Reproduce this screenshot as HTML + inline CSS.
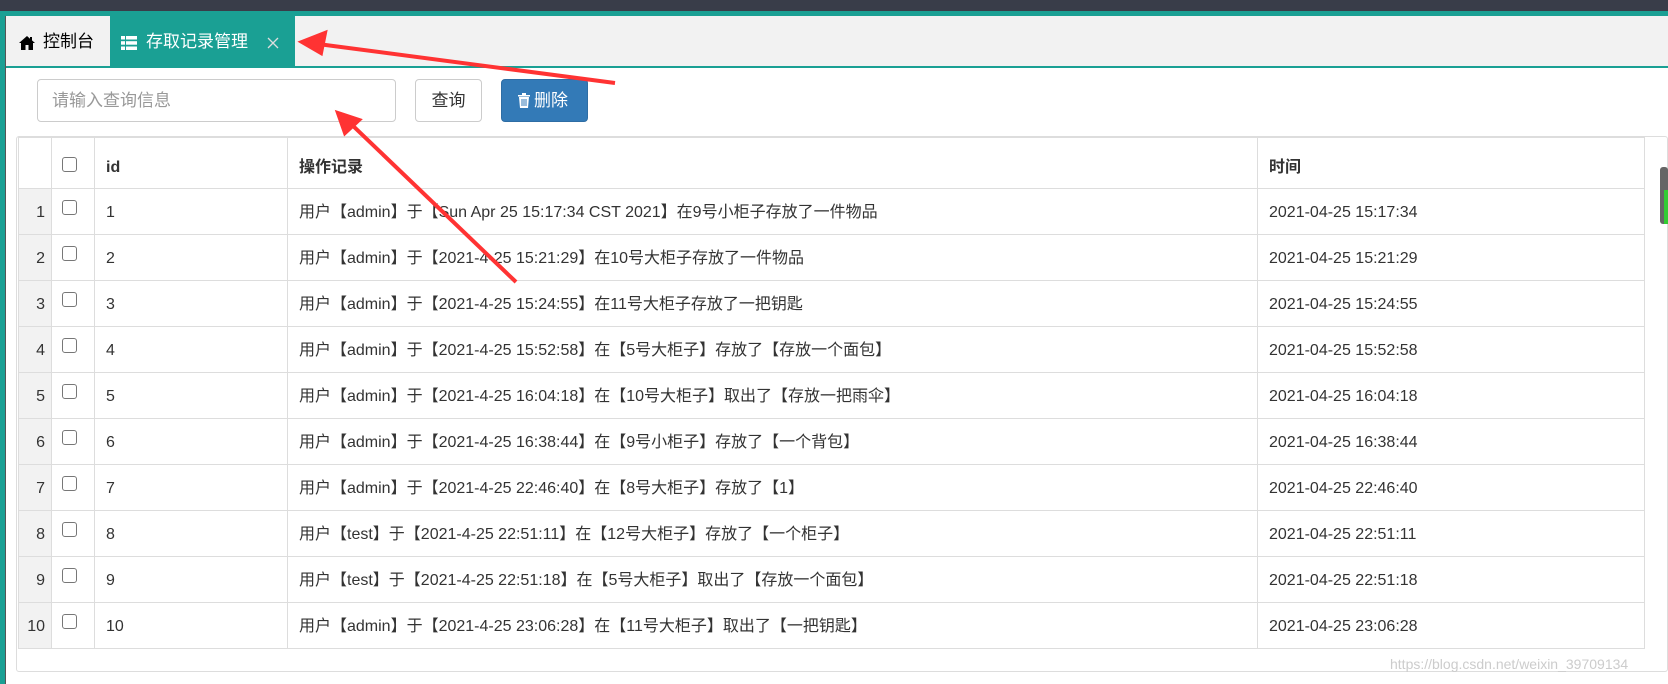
<!DOCTYPE html>
<html><head><meta charset="utf-8"><style>
*{box-sizing:border-box;margin:0;padding:0}
body{width:1668px;height:684px;overflow:hidden;background:#fff;font-family:"Liberation Sans","Noto Sans CJK SC",sans-serif;color:#333;position:relative}
.a{position:absolute;white-space:nowrap}
table{border-collapse:collapse;position:absolute;left:18px;top:137px;width:1627px;font-size:16px}
td,th{border:1px solid #ddd;height:46px;padding:2px 11px 0;text-align:left;white-space:nowrap;line-height:18px}
th{height:51px;vertical-align:bottom;padding-bottom:11px;font-weight:bold}
td.n{background:#f2f2f2;text-align:right;padding:2px 6px 0 0;width:33px}
.cb{display:inline-block;width:15px;height:15px;border:1px solid #777;border-radius:3px;background:#fff}
td.c{width:43px;padding:0 0 0 10px;vertical-align:top;padding-top:11px}
</style></head><body>
<div class="a" style="left:0;top:0;width:1668px;height:11px;background:#393d49"></div>
<div class="a" style="left:0;top:11px;width:1668px;height:5px;background:#1aa094"></div>
<div class="a" style="left:0;top:16px;width:5px;height:668px;background:#1aa094"></div>
<div class="a" style="left:5px;top:16px;width:1px;height:668px;background:#555"></div>
<div class="a" style="left:6px;top:16px;width:1662px;height:50px;background:#f2f2f2"></div>
<div class="a" style="left:6px;top:66px;width:1662px;height:2px;background:#1aa094"></div>
<svg class="a" style="left:19px;top:36px" width="16" height="14" viewBox="0 0 16 14"><path d="M8 0L0 7h2v7h4.5V9h3v5H14V7h2L13 4.4V1h-2v1.7z" fill="#000"/></svg>
<div class="a" style="left:43px;top:32px;font-size:17px;color:#000;line-height:20px">控制台</div>
<div class="a" style="left:110px;top:16px;width:185px;height:50px;background:#1aa094"></div>
<svg class="a" style="left:121px;top:36px" width="16" height="14" viewBox="0 0 16 14" fill="#fff"><rect x="0" y="0" width="4" height="3.5"/><rect x="5" y="0" width="11" height="3.5"/><rect x="0" y="5.2" width="4" height="3.5"/><rect x="5" y="5.2" width="11" height="3.5"/><rect x="0" y="10.5" width="4" height="3.5"/><rect x="5" y="10.5" width="11" height="3.5"/></svg>
<div class="a" style="left:146px;top:32px;font-size:17px;color:#fff;line-height:20px">存取记录管理</div>
<svg class="a" style="left:267px;top:37px" width="12" height="12"><path d="M1 1L11 11M11 1L1 11" stroke="#ddd" stroke-width="1.3"/></svg>
<div class="a" style="left:37px;top:79px;width:359px;height:43px;border:1px solid #ccc;border-radius:4px;color:#999;font-size:17px;padding:11px 14px;line-height:20px">请输入查询信息</div>
<div class="a" style="left:415px;top:79px;width:67px;height:43px;border:1px solid #ccc;border-radius:4px;font-size:17px;padding:11px 0;text-align:center;color:#333;line-height:20px">查询</div>
<div class="a" style="left:501px;top:79px;width:87px;height:43px;background:#337ab7;border:1px solid #2e6da4;border-radius:4px;font-size:17px;padding:11px 0 0 16px;color:#fff;line-height:20px"><svg width="12" height="15" viewBox="0 0 12 15" style="vertical-align:-2px;margin-right:4px"><path d="M0 2h12v1.5H0zM4 0h4v2H4zM1 4h10l-1 11H2z" fill="#fff"/><path d="M4 6v7M6 6v7M8 6v7" stroke="#337ab7" stroke-width="1"/></svg>删除</div>
<div class="a" style="left:16px;top:136px;width:1652px;height:536px;border:1px solid #ddd;border-radius:3px"></div>
<div class="a" style="left:1660px;top:167px;width:8px;height:57px;background:#666;border-radius:3px"></div>
<div class="a" style="left:1664px;top:190px;width:4px;height:34px;background:#3c3"></div>
<table>
<tr><th style="width:33px"></th><th style="width:43px;padding-left:10px"><span class="cb"></span></th><th style="width:193px">id</th><th style="width:970px">操作记录</th><th>时间</th></tr>
<tr><td class="n">1</td><td class="c"><span class="cb"></span></td><td>1</td><td>用户【admin】于【Sun Apr 25 15:17:34 CST 2021】在9号小柜子存放了一件物品</td><td>2021-04-25 15:17:34</td></tr>
<tr><td class="n">2</td><td class="c"><span class="cb"></span></td><td>2</td><td>用户【admin】于【2021-4-25 15:21:29】在10号大柜子存放了一件物品</td><td>2021-04-25 15:21:29</td></tr>
<tr><td class="n">3</td><td class="c"><span class="cb"></span></td><td>3</td><td>用户【admin】于【2021-4-25 15:24:55】在11号大柜子存放了一把钥匙</td><td>2021-04-25 15:24:55</td></tr>
<tr><td class="n">4</td><td class="c"><span class="cb"></span></td><td>4</td><td>用户【admin】于【2021-4-25 15:52:58】在【5号大柜子】存放了【存放一个面包】</td><td>2021-04-25 15:52:58</td></tr>
<tr><td class="n">5</td><td class="c"><span class="cb"></span></td><td>5</td><td>用户【admin】于【2021-4-25 16:04:18】在【10号大柜子】取出了【存放一把雨伞】</td><td>2021-04-25 16:04:18</td></tr>
<tr><td class="n">6</td><td class="c"><span class="cb"></span></td><td>6</td><td>用户【admin】于【2021-4-25 16:38:44】在【9号小柜子】存放了【一个背包】</td><td>2021-04-25 16:38:44</td></tr>
<tr><td class="n">7</td><td class="c"><span class="cb"></span></td><td>7</td><td>用户【admin】于【2021-4-25 22:46:40】在【8号大柜子】存放了【1】</td><td>2021-04-25 22:46:40</td></tr>
<tr><td class="n">8</td><td class="c"><span class="cb"></span></td><td>8</td><td>用户【test】于【2021-4-25 22:51:11】在【12号大柜子】存放了【一个柜子】</td><td>2021-04-25 22:51:11</td></tr>
<tr><td class="n">9</td><td class="c"><span class="cb"></span></td><td>9</td><td>用户【test】于【2021-4-25 22:51:18】在【5号大柜子】取出了【存放一个面包】</td><td>2021-04-25 22:51:18</td></tr>
<tr><td class="n">10</td><td class="c"><span class="cb"></span></td><td>10</td><td>用户【admin】于【2021-4-25 23:06:28】在【11号大柜子】取出了【一把钥匙】</td><td>2021-04-25 23:06:28</td></tr>
</table>
<div class="a" style="left:1390px;top:656px;font-size:14px;color:#ccc">https://blog.csdn.net/weixin_39709134</div>
<svg class="a" style="left:0;top:0" width="1668" height="684">
<g stroke="#f33" stroke-width="4" fill="#f33">
<line x1="615" y1="83" x2="318" y2="44"/><polygon points="302,42 325,33 321,53"/>
<line x1="516" y1="282" x2="350" y2="123"/><polygon points="338,113 359,120 345,133"/>
</g></svg>
</body></html>
